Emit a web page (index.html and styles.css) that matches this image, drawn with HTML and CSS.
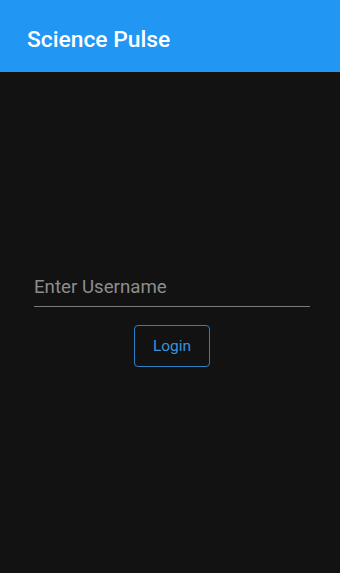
FILE: index.html
```html
<!DOCTYPE html>
<html>
<head>
<meta charset="utf-8">
<link rel="stylesheet" href="styles.css">
</head>
<body>
<div class="app">
  <header class="appbar"><h1 class="title">Science Pulse</h1></header>
  <main class="content">
    <div class="form">
      <div class="field"><input class="input" type="text" placeholder="Enter Username"></div>
      <button class="login">Login</button>
    </div>
  </main>
</div>
</body>
</html>
```
FILE: styles.css
```css
html, body {
  margin: 0;
  padding: 0;
  height: 100%;
  background: #121212;
  font-family: Roboto, "Noto Sans", sans-serif;
}
.app {
  display: flex;
  flex-direction: column;
  height: 573px;
}
.appbar {
  height: 72px;
  background: #2196f3;
  display: flex;
  align-items: center;
  padding: 0 27px;
  flex-shrink: 0;
}
.title {
  margin: 0;
  color: #fff;
  font-size: 22.8px;
  font-weight: 500;
  padding-top: 6px;
}
.content {
  flex: 1;
  display: flex;
  flex-direction: column;
  justify-content: center;
  padding: 0 30px 0 34px;
}
.form {
  display: flex;
  flex-direction: column;
  align-items: center;
  gap: 18px;
  margin-top: -6px;
}
.field {
  width: 100%;
  border-bottom: 1px solid #7a7a7a;
}
.input {
  width: 100%;
  box-sizing: border-box;
  background: transparent;
  border: none;
  outline: none;
  padding: 3px 0 7px;
  font-family: Roboto, "Noto Sans", sans-serif;
  font-size: 18.7px;
  color: #ddd;
  height: 33px;
}
.input::placeholder {
  color: #8d8d8d;
}
.login {
  width: 76px;
  height: 42px;
  background: transparent;
  border: 1px solid #2f7fc4;
  border-radius: 4px;
  color: #3a92dc;
  font-family: Roboto, "Noto Sans", sans-serif;
  font-size: 15.5px;
  padding: 0;
}
```
